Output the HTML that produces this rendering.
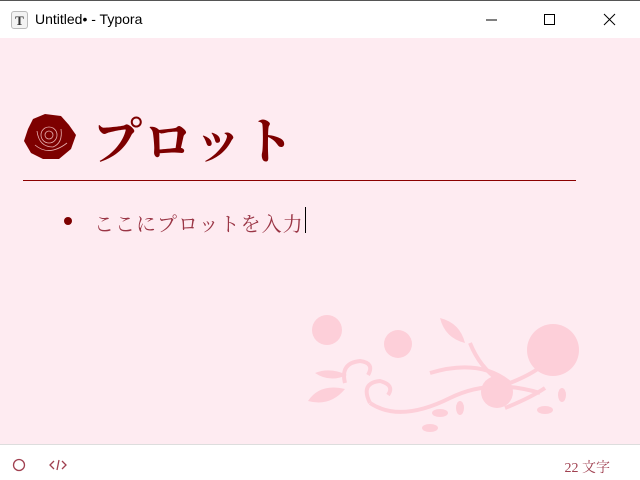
<!DOCTYPE html>
<html><head><meta charset="utf-8"><style>
*{margin:0;padding:0;box-sizing:border-box}
body{width:640px;height:480px;overflow:hidden;background:#fff;font-family:"Liberation Sans","Noto Sans CJK JP",sans-serif;position:relative}
.title{position:absolute;top:0;left:0;width:640px;height:38px;background:#fff;border-top:1px solid #555}
.title .t{position:absolute;left:35px;top:10px;font-size:14px;color:#000}
.logo{position:absolute;left:11px;top:10px;width:17px;height:18px;border:1px solid #bbb;border-radius:3px;background:#f3f3f3;font:bold 13px "Liberation Serif",serif;text-align:center;line-height:17px;color:#333}
.main{position:absolute;top:38px;left:0;width:640px;height:406px;background:#feebf1}
h1{position:absolute;left:92px;top:64px;font:bold 50px "Noto Serif CJK SC","Noto Serif CJK JP",serif;color:#7d0000;letter-spacing:1px}
.hr{position:absolute;left:23px;top:142px;width:553px;height:1px;background:#8b0000}
.li{position:absolute;left:94px;top:170px;font:20px "Noto Serif CJK SC","Noto Serif CJK JP",serif;color:#9a3545;letter-spacing:1px}
.dot{position:absolute;left:64px;top:179px;width:8px;height:8px;border-radius:50%;background:#7d0000}
.cur{position:absolute;left:305px;top:169px;width:1px;height:26px;background:#000}
.status{position:absolute;top:444px;left:0;width:640px;height:36px;background:#fff;border-top:1px solid #ddd}
.cnt{position:absolute;right:30px;top:12px;font:14px "Liberation Serif","Noto Serif CJK JP",serif;color:#a04050}
</style></head><body>
<div class="title"><div class="logo">T</div><div class="t">Untitled• - Typora</div>
<svg style="position:absolute;left:480px;top:12px" width="140" height="14"><line x1="6" y1="7" x2="17" y2="7" stroke="#000"/><rect x="64.5" y="1.5" width="10" height="10" fill="none" stroke="#000"/><path d="M124 1L135 12M135 1L124 12" stroke="#000"/></svg></div>
<div class="main">
<svg style="position:absolute;left:23px;top:75px" width="54" height="48" viewBox="0 0 54 48"><path d="M10 6 L22 1 L38 3 L46 12 L53 22 L48 36 L36 46 L20 46 L8 40 L1 28 L5 16Z" fill="#7d0000"/><g fill="none" stroke="#e8b0b0" stroke-width=".8"><circle cx="26" cy="22" r="4"/><circle cx="26" cy="22" r="8"/><path d="M14 18 Q16 34 30 34 Q40 30 38 16"/><path d="M12 32 Q26 44 44 30"/></g></svg>
<h1>プロット</h1>
<div class="hr"></div>
<div class="dot"></div>
<div class="li">ここにプロットを入力</div>
<div class="cur"></div>
<svg style="position:absolute;left:300px;top:275px" width="290" height="130" viewBox="0 0 290 130" fill="#fdcfd9">
<circle cx="27" cy="17" r="15"/><circle cx="98" cy="31" r="14"/><circle cx="253" cy="37" r="26"/><circle cx="197" cy="79" r="16"/>
<path d="M8 88 Q20 70 45 76 Q30 94 8 88Z"/><path d="M15 60 Q30 54 47 62 Q30 70 15 60Z"/>
<path d="M140 5 Q160 10 165 30 Q145 25 140 5Z"/>
<g fill="none" stroke="#fdcfd9" stroke-width="4"><path d="M45 70 Q40 50 60 48 Q75 50 68 62"/><path d="M70 90 Q60 70 80 68 Q95 72 88 82"/><path d="M70 90 Q100 110 150 85 Q190 65 240 80"/><path d="M130 60 Q180 45 210 70 Q235 60 245 50"/><path d="M170 30 Q180 55 200 68"/><path d="M205 95 Q230 85 245 75"/></g>
<ellipse cx="140" cy="100" rx="8" ry="4"/><ellipse cx="130" cy="115" rx="8" ry="4"/><ellipse cx="160" cy="95" rx="4" ry="7"/><ellipse cx="245" cy="97" rx="8" ry="4"/><ellipse cx="262" cy="82" rx="4" ry="7"/>
</svg>
</div>
<div class="status">
<svg style="position:absolute;left:12px;top:13px" width="60" height="14"><circle cx="7" cy="7" r="5.5" fill="none" stroke="#a04050" stroke-width="1.3"/><path d="M42 3L38 7L42 11M50 3L54 7L50 11M47 2L45 12" fill="none" stroke="#a04050" stroke-width="1.3"/></svg>
<div class="cnt">22 文字</div>
</div>
</body></html>
